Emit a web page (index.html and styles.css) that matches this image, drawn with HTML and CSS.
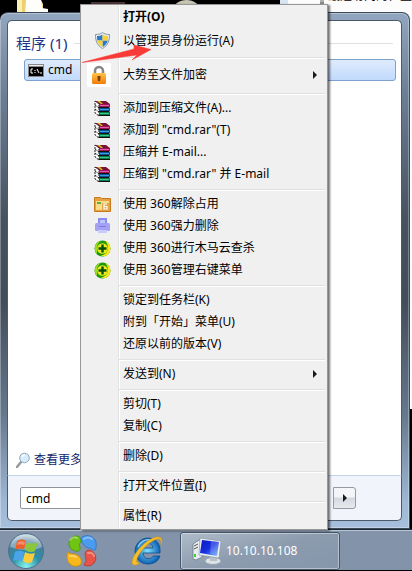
FILE: index.html
```html
<!DOCTYPE html>
<html lang="zh-CN">
<head>
  <meta charset="utf-8">
  <title>cmd</title>
  <link rel="stylesheet" href="styles.css">
</head>
<body>
  <!-- shared icons -->
  <svg width="0" height="0" class="defs">
    <defs>
      <symbol id="rar" viewBox="0 0 17 17">
        <path d="M1 1h11l4 2v13H5l-4-3z" fill="#fff"/>
        <path d="M1 1l4 3v12L1 13zM1 5l4 3M1 9l4 3" fill="#fff" stroke="#222" stroke-dasharray="2 1"/>
        <path d="M1 1h11l4 3H5z" fill="#7a1238"/>
        <path d="M3 1h3l3 3H7z" fill="#c8c020"/>
        <path d="M5 4h11v3H5z" fill="#a01258"/>
        <path d="M6 5.500h9" stroke="#e060a8"/>
        <path d="M4 7h11l1 1H5z" fill="#111"/>
        <path d="M5 8h11v3H5z" fill="#0c5298"/>
        <path d="M6 9.500h9" stroke="#3c9ce0"/>
        <path d="M4 11h11l1 1H5z" fill="#111"/>
        <path d="M5 12h11v3H5z" fill="#087a4a"/>
        <path d="M6 13.500h9" stroke="#38c888"/>
        <path d="M4 15h12v1H5z" fill="#111"/>
      </symbol>
      <symbol id="plus360" viewBox="0 0 17 17">
        <circle cx="8.500" cy="8.500" r="8" fill="#1f9a10"/>
        <path d="M11 1A8 8 0 0 1 12 15.700C9.500 16.500 8 16 7 15.500 11 15 14 12 14 8 14 5 13 3 11 1z" fill="#ffe818"/>
        <path d="M3 14A8 8 0 0 1 7 .7C5 2 3 5 3 8c0 2 0 4 0 6z" fill="#9cdc18"/>
        <circle cx="8.500" cy="8.500" r="5.300" fill="#e8ec20"/>
        <path d="M8.500 4.500v8M4.500 8.500h8" stroke="#06500c" stroke-width="2.400"/>
      </symbol>
      <linearGradient id="gold" x2="0" y2="1"><stop stop-color="#ffc54a"/><stop offset="1" stop-color="#f07c08"/></linearGradient>
      <linearGradient id="screen" x2="1" y2="1"><stop stop-color="#0a1cc0"/><stop offset=".5" stop-color="#1830e0"/><stop offset="1" stop-color="#6ab4ff"/></linearGradient>
      <radialGradient id="orb" cx=".5" cy=".95" r=".9"><stop stop-color="#8cf4ec"/><stop offset=".45" stop-color="#2a8fa8"/><stop offset=".8" stop-color="#4a7c98"/><stop offset="1" stop-color="#b4ccd8"/></radialGradient>
      <radialGradient id="ieblue"><stop stop-color="#7fe0ff"/><stop offset="1" stop-color="#0f62b4"/></radialGradient>
    </defs>
  </svg>

  <div class="desktop">
    <svg class="folder" viewBox="0 0 36 14">
      <path d="M1 0h24l2 4v10H1z" fill="#f4e08c"/>
      <path d="M1 0h6v14H1z" fill="#fbf0b4"/>
      <path d="M9 0h16l1 8 6 1v5H9z" fill="#fdfdfa"/>
      <path d="M6 0h4L9 14H6z" fill="#ecd070"/>
    </svg>
    <div class="thumb"></div>
    <div class="disc"></div>
    <div class="explorer">
      <span class="drive"></span>
      <span>最近访问的位置</span>
    </div>

    <main class="start">
      <div class="results">
        <section>
          <h2>程序 (1)</h2>
          <a class="result" href="#">
            <svg width="16" height="13" viewBox="0 0 16 13">
              <path d="M0 0h16v13H0z" fill="#888"/>
              <path d="M1 1h14v1H1z" fill="#e8eef8"/>
              <path d="M1 3h14v9H1z" fill="#000"/>
              <path d="M5 5H3v4h2M7 6v1M7 8v1M9 5l2 4M12 9h2" fill="none" stroke="#fff"/>
            </svg>
            cmd
          </a>
        </section>
        <a class="more" href="#">
          <svg width="14" height="16" viewBox="0 0 14 16">
            <path d="M1 15l4-5" stroke="#9a9a9a" stroke-width="2.500" stroke-linecap="round"/>
            <circle cx="8.500" cy="6" r="4.800" fill="#d4ecfc" stroke="#93a8bc"/>
            <path d="M6 5a3 3 0 0 1 3-2" fill="none" stroke="#fff" stroke-width="1.500"/>
          </svg>
          查看更多结果
        </a>
      </div>
      <form class="search">
        <input type="text" value="cmd" aria-label="搜索程序和文件">
        <button type="button" class="power" aria-label="关机选项"><i class="tri"></i></button>
      </form>
    </main>

    <footer class="taskbar">
      <button class="orb" aria-label="开始">
        <svg width="44" height="38" viewBox="0 0 44 38">
          <circle cx="22" cy="19" r="17.500" fill="url(#orb)" stroke="#50708c"/>
          <path d="M6 15C9 5 16 2.500 22 2.500S35 5 38 15C28 20 16 18 6 15z" fill="#fff" opacity=".35"/>
          <path d="M13 9c3-2 7-2 9 0l-2 9c-3-2-7-1-9 0z" fill="#f0602c"/>
          <path d="M23 10c3 2 7 2 11 0l-3 9c-3 2-7 1-10-1z" fill="#8cc63c"/>
          <path d="M11 20c3-2 6-1 9 0l-2 9c-3-2-6-1-9 0z" fill="#4aa4ec"/>
          <path d="M21 20c3 2 7 2 10 1l-3 9c-3 2-6 1-9-1z" fill="#fccc3c"/>
          <path d="M14 10c2-1 5-1 7 0l-1 3c-3-1-5-1-7 0z" fill="#fff" opacity=".3"/>
        </svg>
      </button>
      <button class="pin" aria-label="360">
        <svg width="32" height="32" viewBox="0 0 32 32">
          <path d="M12 1a7.500 7.500 0 0 0-3 15c3 1 6-1 5-4-1-2-1-3 1-5 0-3-1-5-3-6z" fill="#6ec410" stroke="#43960c" stroke-width=".8"/>
          <path d="M15 3c3-3 8-3 11-1 5 3 5 9 3 13-2 1-3-2-6-2-4 0-8-6-8-10z" fill="#4b9cf0" stroke="#2b70c4" stroke-width=".8"/>
          <path d="M2 17c3 3 6 1 9 3 4 2 5 6 4 9-3 3-8 3-11 0s-4-8-2-12z" fill="#f8b81c" stroke="#c88a08" stroke-width=".8"/>
          <path d="M22 15a8 8 0 1 1-4 15c0-2 3-3 2-6-1-4-2-7 2-9z" fill="#e85448" stroke="#b83430" stroke-width=".8"/>
          <path d="M4 5c2-3 5-3 7-2M18 4c2-2 6-2 8 0M4 21c2-1 4 0 6 1M22 18c3-1 6 1 6 3" stroke="#fff" stroke-width="2" opacity=".35" fill="none" stroke-linecap="round"/>
        </svg>
      </button>
      <button class="pin ie" aria-label="Internet Explorer">
        <svg width="34" height="32" viewBox="0 0 34 32">
          <path fill-rule="evenodd" d="M18 3c8 0 13 6 12 15H13c0 7 9 7 10 3h7c-2 6-7 8-12 8C10 29 5 23 5 16S11 3 18 3zM13 13h10c0-6-10-6-10 0z" fill="url(#ieblue)" stroke="#0d4c92" stroke-width=".8"/>
          <path d="M8 12c2-5 7-8 12-7" fill="none" stroke="#b8ecff" stroke-width="1.500" opacity=".7"/>
          <path d="M31 10c2-4 1-8-3-8C20 1 3 17 2 27c0 4 4 4 8 1-3 0-4-1-3-4C9 17 21 4 29 4c2 0 2 3 2 6z" fill="#f6be28" stroke="#c88c10" stroke-width=".5"/>
        </svg>
      </button>
      <button class="task">
        <svg width="34" height="32" viewBox="0 0 34 32">
          <path d="M2 9l6-4 3 1v16l-6 3-3-1z" fill="#e8ecf0" stroke="#6c7884" stroke-width=".8"/>
          <path d="M3 11l4-2M3 14l4-2" stroke="#555"/>
          <path d="M3 19h2v3H3z" fill="#3ad43a"/>
          <ellipse cx="22" cy="26" rx="8" ry="3.500" fill="#dde2e6" stroke="#98a2aa"/>
          <path d="M19 21h7v5h-7z" fill="#b8c0c8"/>
          <path d="M9 3l21 3-2 17-20-3z" fill="#eef2f6" stroke="#8896a4" stroke-width=".7"/>
          <path d="M11 5l17 2-2 14-17-3z" fill="url(#screen)"/>
          <path d="M20 6l8 1-2 14-7-2z" fill="#fff" opacity=".2"/>
        </svg>
        10.10.10.108
      </button>
    </footer>

    <nav class="menu">
      <ul>
        <li><button><i class="icon"></i><b>打开(O)</b></button></li>
        <li class="tall"><button>
          <i class="icon"><svg width="15" height="17" viewBox="0 0 15 17">
            <path d="M7.500.5C9 2 12 2.500 14.500 2.500 14.500 9 13 13.500 7.500 16.500 2 13.500.5 9 .5 2.500 3 2.500 6 2 7.500.5z" fill="#e8edf2" stroke="#8896a4"/>
            <path d="M7.500 2.500v6H2.200L2 4c2 0 4-.5 5.500-1.500zM7.500 8.500h5.300c-.8 3-2.300 5-5.300 6.500z" fill="#2878cc"/>
            <path d="M7.500 2.500v6h5.300L13 4c-2 0-4-.5-5.500-1.500zM7.500 8.500H2.200c.8 3 2.300 5 5.300 6.500z" fill="#f8d030"/>
          </svg></i>以管理员身份运行(A)</button></li>
        <li class="line"></li>
        <li class="lock"><button>
          <i class="icon white"><svg width="16" height="20" viewBox="0 0 16 20">
            <path d="M4 10V6a4 4 0 0 1 8 0v4" fill="none" stroke="#858585" stroke-width="2.500"/>
            <rect x="1" y="8" width="14" height="11" rx="1.500" fill="url(#gold)"/>
            <path d="M6.500 11h3v2l-.5 3H7l-.5-3z" fill="#7c3c04"/>
          </svg></i>大势至文件加密<i class="tri"></i></button></li>
        <li class="line"></li>
        <li><button><i class="icon"><svg width="17" height="17"><use href="#rar"/></svg></i>添加到压缩文件(A)...</button></li>
        <li><button><i class="icon"><svg width="17" height="17"><use href="#rar"/></svg></i>添加到 "cmd.rar"(T)</button></li>
        <li><button><i class="icon"><svg width="17" height="17"><use href="#rar"/></svg></i>压缩并 E-mail...</button></li>
        <li><button><i class="icon"><svg width="17" height="17"><use href="#rar"/></svg></i>压缩到 "cmd.rar" 并 E-mail</button></li>
        <li class="line"></li>
        <li><button>
          <i class="icon"><svg width="17" height="16" viewBox="0 0 17 16">
            <path d="M.5 1.500h6l1 1h9v13H.5z" fill="#e8a040" stroke="#c47c20"/>
            <path d="M2 5h13v9H2z" fill="#f8dc88"/>
            <path d="M3 7h4" stroke="#58b040" stroke-width="2"/>
            <path d="M8 7h7v7H8z" fill="#d89030" opacity=".7"/>
            <path d="M13 8h-3v5h3v-2.500h-3" fill="none" stroke="#fff" stroke-width="1.200"/>
          </svg></i>使用 360解除占用</button></li>
        <li><button>
          <i class="icon"><svg width="15" height="16" viewBox="0 0 15 16">
            <path d="M3 0h9v6H3z" fill="#8c8cf0"/>
            <path d="M5 2h5v3H5z" fill="#b8c8fc"/>
            <rect y="5" width="15" height="8" rx="1.500" fill="#a4a0f4"/>
            <path d="M4 8.500h7" stroke="#7c78e4"/>
            <path d="M3 12h9v3H3z" fill="#c8ccfc"/>
          </svg></i>使用 360强力删除</button></li>
        <li><button><i class="icon"><svg width="17" height="17"><use href="#plus360"/></svg></i>使用 360进行木马云查杀</button></li>
        <li><button><i class="icon"><svg width="17" height="17"><use href="#plus360"/></svg></i>使用 360管理右键菜单</button></li>
        <li class="line"></li>
        <li><button><i class="icon"></i>锁定到任务栏(K)</button></li>
        <li><button><i class="icon"></i>附到「开始」菜单(U)</button></li>
        <li><button><i class="icon"></i>还原以前的版本(V)</button></li>
        <li class="line"></li>
        <li><button><i class="icon"></i>发送到(N)<i class="tri"></i></button></li>
        <li class="line"></li>
        <li><button><i class="icon"></i>剪切(T)</button></li>
        <li><button><i class="icon"></i>复制(C)</button></li>
        <li class="line"></li>
        <li><button><i class="icon"></i>删除(D)</button></li>
        <li class="line"></li>
        <li><button><i class="icon"></i>打开文件位置(I)</button></li>
        <li class="line"></li>
        <li><button><i class="icon"></i>属性(R)</button></li>
      </ul>
    </nav>

    <svg class="pointer" viewBox="0 0 70 20">
      <path d="M0 18.500L52 5V1l17 4.500L50 16l5-5z" fill="#f83b36" stroke="#f83b36" stroke-width=".5"/>
    </svg>
  </div>
</body>
</html>
```

FILE: styles.css
```css
* {
  box-sizing: border-box;
}

body {
  margin: 0;
  background: #000;
  color: #000;
  font: 12px/16px "Noto Sans", "Noto Sans CJK SC", sans-serif;
}

button, input {
  font: inherit;
  color: inherit;
}

button {
  margin: 0;
  padding: 0;
  border: none;
  background: none;
}

a {
  color: inherit;
  text-decoration: none;
}

svg {
  display: block;
  flex: none;
}

.defs {
  position: absolute;
}

.desktop {
  position: relative;
  display: flex;
  flex-direction: column;
  min-height: 100vh;
  padding: 12px 0 1px;
  overflow: hidden;
}

/* things lying on the desktop behind the start menu */
.folder {
  position: absolute;
  left: 16px;
  top: 0;
  width: 36px;
}

.thumb {
  position: absolute;
  left: 91px;
  top: 2px;
  width: 34px;
  height: 8px;
  background: #4a3438;
}

.disc {
  position: absolute;
  left: 173px;
  top: 0;
  width: 27px;
  height: 20px;
  border-radius: 50%;
  background: #c8c4b4;
}

.explorer {
  position: absolute;
  left: 280px;
  right: 0;
  top: 0;
  height: 409px;
  border-left: 8px solid #d8e6f4;
  background: #fcfcfd;
  display: flex;
  gap: 4px;
  padding-left: 32px;
  overflow: hidden;
  white-space: nowrap;
}

.explorer span {
  margin-top: -12px;
}

.explorer .drive {
  width: 13px;
  height: 16px;
  background: #b0b0b0;
  border-bottom: 2px solid #8a8a8a;
}

/* start menu */
.start {
  position: relative;
  flex: 1;
  display: flex;
  flex-direction: column;
  margin-right: 2px;
  padding: 7px;
  border: 1px solid #3c4a5a;
  border-left: none;
  border-radius: 8px 8px 0 0;
  background: linear-gradient(#92a6c0, #6c7e96 16%, #46525f 40%, #424d5a 56%, #66788e 78%, #9fb8d6 95%, #a6bfdc);
  box-shadow: inset 0 0 0 1px rgba(255, 255, 255, 0.3);
}

.results {
  flex: 1;
  display: flex;
  flex-direction: column;
  justify-content: space-between;
  padding: 11px 5px 7px 8px;
  border: 1px solid #4c5a6a;
  border-bottom: none;
  border-radius: 5px 5px 0 0;
  background: #fff;
}

h2 {
  display: flex;
  align-items: center;
  gap: 7px;
  margin: 0 3px 5px 0;
  font-size: 15px;
  font-weight: normal;
  line-height: 22px;
  color: #1e3287;
}

h2::after {
  content: "";
  flex: 1;
  height: 1px;
  background: #e0e0e0;
}

.result {
  display: flex;
  align-items: center;
  gap: 4px;
  height: 22px;
  margin-left: 8px;
  padding: 0 3px;
  border: 1px solid #7da2ce;
  border-radius: 3px;
  background: linear-gradient(#dfebfc, #c1dafc);
}

.more {
  display: flex;
  align-items: center;
  gap: 4px;
  color: #10266c;
}

.search {
  display: flex;
  gap: 153px;
  padding: 11px 12px;
  border: 1px solid #4c5a6a;
  border-top: 1px solid #c4d4e8;
  border-radius: 0 0 5px 5px;
  background: #f1f4fb;
}

.search input {
  width: 160px;
  height: 22px;
  padding: 0 5px;
  border: 1px solid #8e9299;
  border-radius: 2px;
  background: #fff;
}

.power {
  display: flex;
  align-items: center;
  justify-content: center;
  width: 23px;
  border: 1px solid #9499a2;
  border-radius: 0 3px 3px 0;
  background: linear-gradient(#f4f5f8 45%, #d4d8df 50%, #e8eaef);
}

.tri {
  border: 4px solid transparent;
  border-left: 4px solid #1a1a1a;
  border-right: none;
}

/* context menu */
.menu {
  position: absolute;
  left: 80px;
  top: 4px;
  width: 248px;
  padding: 1px 2px 2px;
  border: 1px solid #979797;
  background: #f0f0f0;
  box-shadow: 2px 1px 2px rgba(0, 0, 0, 0.55);
}

.menu ul {
  margin: 0;
  padding: 0;
  list-style: none;
  background: linear-gradient(90deg, transparent 35px, #e2e3e3 35px, #e2e3e3 36px, #fff 36px, #fff 37px, transparent 37px);
}

.menu li {
  display: flex;
  height: 22px;
}

.menu .tall {
  height: 25px;
}

.menu .lock {
  height: 28px;
}

.menu .line {
  height: 8px;
  padding: 4px 0 2px 36px;
}

.menu .line::after {
  content: "";
  flex: 1;
  border-top: 1px solid #e0e0e0;
  border-bottom: 1px solid #fff;
}

.menu button {
  flex: 1;
  display: flex;
  align-items: center;
  padding-right: 8px;
  text-align: left;
  white-space: nowrap;
}

.menu .tri {
  margin-left: auto;
}

.icon {
  display: flex;
  align-items: center;
  justify-content: center;
  width: 24px;
  height: 22px;
  margin: 0 8px 0 8px;
}

.menu .icon {
  margin: 0 9px 0 7px;
}

.menu .white {
  height: 24px;
  margin: 0 12px 0 4px;
  background: #fff;
}

/* taskbar */
.taskbar {
  display: flex;
  align-items: center;
  height: 41px;
  padding: 2px 0 0 4px;
  border-top: 1px solid #1c2530;
  background: #8394aa;
  box-shadow: inset 0 1px #b8c6d6;
}

.pin {
  margin-left: 18px;
}

.ie {
  margin-left: 32px;
}

.task {
  display: flex;
  align-items: center;
  gap: 1px;
  width: 160px;
  height: 38px;
  margin-left: 16px;
  padding: 0 10px;
  border: 1px solid #48586c;
  border-radius: 3px;
  background: linear-gradient(165deg, #b0bcca, #8c9bae 50%, #8696ab);
  box-shadow: inset 0 0 0 1px rgba(255, 255, 255, 0.4);
  color: #fff;
}

/* red arrow */
.pointer {
  position: absolute;
  left: 82px;
  top: 44px;
  width: 70px;
}
```
